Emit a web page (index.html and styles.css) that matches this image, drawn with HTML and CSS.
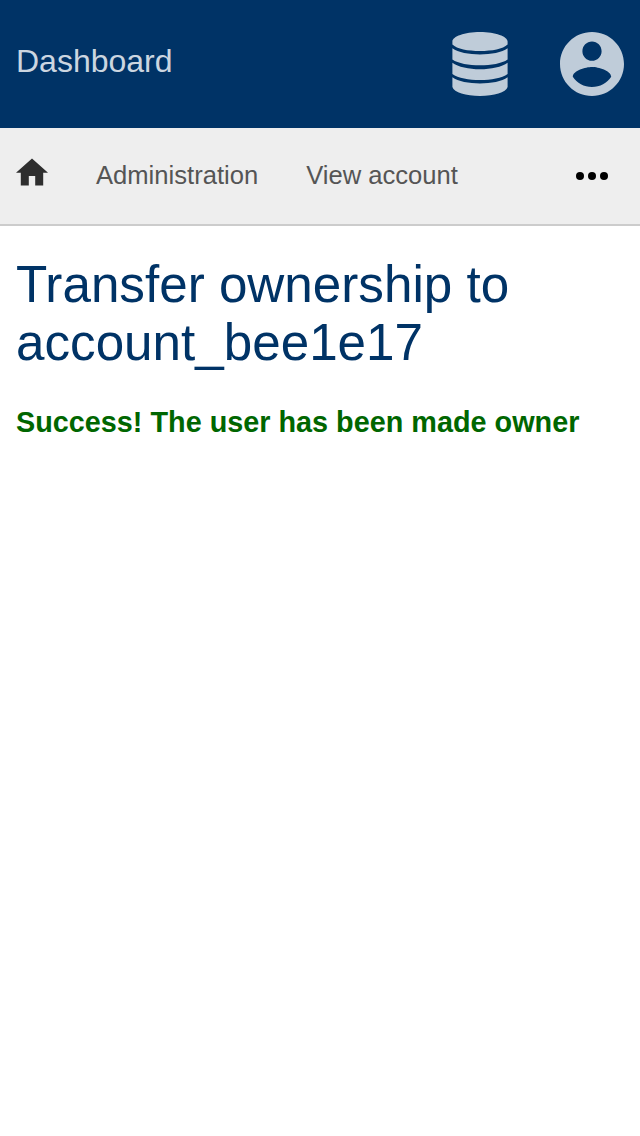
FILE: index.html
```html
<!DOCTYPE html>
<html lang="en">
<head>
<meta charset="utf-8">
<title>Transfer ownership</title>
<link rel="stylesheet" href="styles.css">
</head>
<body>
<header class="topbar">
  <span class="brand">Dashboard</span>
  <svg class="top-icon database" viewBox="0 0 56 64"><path d="M28 0C43.500 0 55.600 4.600 55.600 9.500V12.500C51 17 40 19 28 19S5 17 .4 12.500V9.500C.4 4.600 12.500 0 28 0zM.4 16.300C6 20.500 17 22.500 28 22.500S50 20.500 55.600 16.300V27.500C50 31.500 39 33.300 28 33.300S6 31.500 .4 27.500zM.4 30.700C6 35 17 37.200 28 37.200S50 35 55.600 30.700V42C50 46 39 48 28 48S6 46 .4 42zM.4 45.300C6 49.500 17 51.500 28 51.500S50 49.500 55.600 45.300V55C54 60.500 42 64 28 64S2 60.500 .4 55z"/></svg>
  <svg class="top-icon user" viewBox="2 2 20 20"><path d="M12 2C6.480 2 2 6.480 2 12s4.480 10 10 10 10-4.480 10-10S17.520 2 12 2zm0 3c1.660 0 3 1.340 3 3s-1.340 3-3 3-3-1.340-3-3 1.340-3 3-3zm0 14.200c-2.500 0-4.710-1.280-6-3.220.03-1.990 4-3.080 6-3.080 1.990 0 5.970 1.090 6 3.080-1.290 1.940-3.500 3.220-6 3.220z"/></svg>
</header>
<nav class="crumbs">
  <svg class="home" viewBox="2 3 20 17"><path d="M10 20v-6h4v6h5v-8h3L12 3 2 12h3v8z"/></svg>
  <a class="crumb">Administration</a>
  <a class="crumb">View account</a>
  <svg class="more" viewBox="0 0 32 8"><circle cx="4" cy="4" r="4"/><circle cx="16" cy="4" r="4"/><circle cx="28" cy="4" r="4"/></svg>
</nav>
<main class="content">
  <h1 class="title">Transfer ownership to account_bee1e17</h1>
  <p class="success">Success! The user has been made owner</p>
</main>
</body>
</html>
```

FILE: styles.css
```css
body { margin: 0; background: #fff; font-family: "Liberation Sans", Arial, sans-serif; }
.topbar { box-sizing: border-box; height: 128px; padding: 0 16px; display: flex; align-items: center; background: #036; }
.brand { margin-right: auto; padding-bottom: 6px; color: #ccd6e0; font-size: 32px; line-height: 38px; }
.top-icon { height: 64px; fill: #bfccd9; }
.database { width: 56px; margin-right: 52px; }
.user { width: 64px; }
.crumbs { box-sizing: border-box; height: 98px; padding: 0 32px 0 16px; display: flex; align-items: center; background: #eee; border-bottom: 2px solid #ccc; }
.home { width: 32px; height: 28px; margin-bottom: 8px; fill: #2e2e2e; }
.crumb { margin-left: 48px; padding-bottom: 2px; color: #555; font-size: 25.6px; line-height: 30px; }
.more { width: 32px; height: 8px; margin-left: auto; }
.content { padding: 30px 16px; }
.title { margin: 0; color: #036; font-size: 51.2px; font-weight: 400; line-height: 58px; }
.success { margin: 33px 0 0; color: #060; font-size: 28.8px; font-weight: 700; line-height: 34px; white-space: nowrap; }
```
